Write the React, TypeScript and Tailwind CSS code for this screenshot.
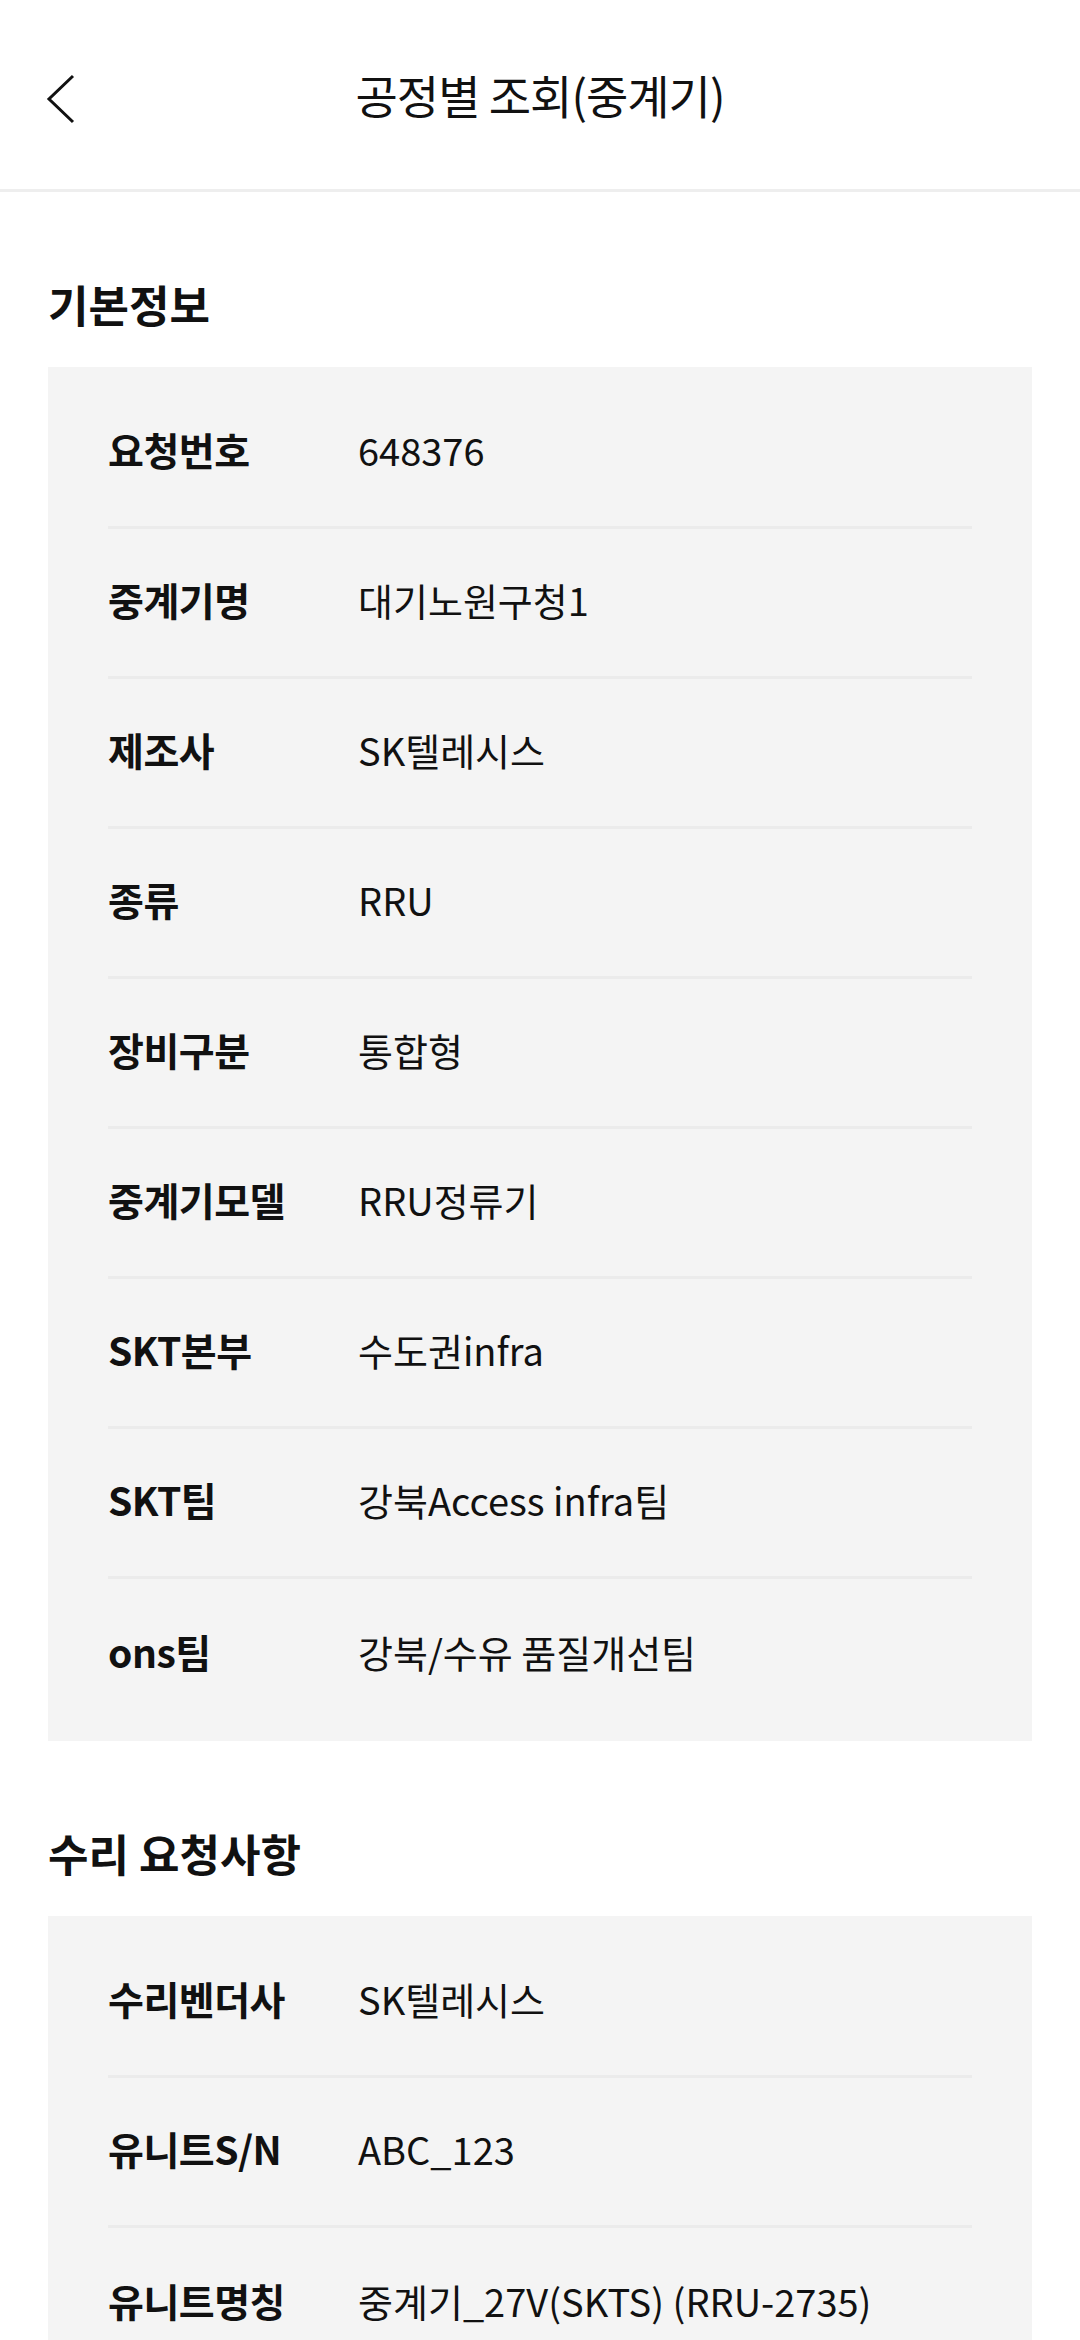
import React from "react";

const basic: [string, string][] = [
  ["요청번호", "648376"],
  ["중계기명", "대기노원구청1"],
  ["제조사", "SK텔레시스"],
  ["종류", "RRU"],
  ["장비구분", "통합형"],
  ["중계기모델", "RRU정류기"],
  ["SKT본부", "수도권infra"],
  ["SKT팀", "강북Access infra팀"],
  ["ons팀", "강북/수유 품질개선팀"],
];

const repair: [string, string][] = [
  ["수리벤더사", "SK텔레시스"],
  ["유니트S/N", "ABC_123"],
  ["유니트명칭", "중계기_27V(SKTS) (RRU-2735)"],
];

function Section({ title, rows }: { title: string; rows: [string, string][] }) {
  return (
    <section className="px-[48px] pt-[85px]">
      <h2 className="h-[60px] pb-[6px] text-[44px] leading-[54px] font-bold text-[#111111]">{title}</h2>
      <div className="mt-[30px] bg-[#f4f4f4] px-[60px] py-[12px]">
        {rows.map(([k, v], i) => (
          <div
            key={k}
            className={
              "flex h-[150px] items-center pb-[6px] " +
              (i < rows.length - 1 ? "border-b-[3px] border-[#ebebeb]" : "")
            }
          >
            <div className="w-[250px] shrink-0 whitespace-nowrap text-[39px] font-bold text-[#111111] tracking-[-0.5px]">{k}</div>
            <div className="whitespace-nowrap text-[38px] font-normal text-[#111111]">{v}</div>
          </div>
        ))}
      </div>
    </section>
  );
}

export default function App() {
  return (
    <div
      className="min-h-[2340px] w-[1080px] bg-white"
      style={{ fontFamily: '"Noto Sans CJK KR", "Noto Sans", sans-serif' }}
    >
      <header className="relative flex h-[192px] items-center justify-center border-b-[3px] border-[#eeeeee]">
        <svg
          className="absolute left-[40px] top-[68px]"
          width="44"
          height="62"
          viewBox="0 0 44 62"
          fill="none"
          stroke="#111111"
          strokeWidth="3"
        >
          <path d="M33 8 L9 31 L33 54" />
        </svg>
        <h1 className="text-[46px] font-normal text-[#111111] tracking-[-1px]">공정별 조회(중계기)</h1>
      </header>
      <Section title="기본정보" rows={basic} />
      <Section title="수리 요청사항" rows={repair} />
    </div>
  );
}
